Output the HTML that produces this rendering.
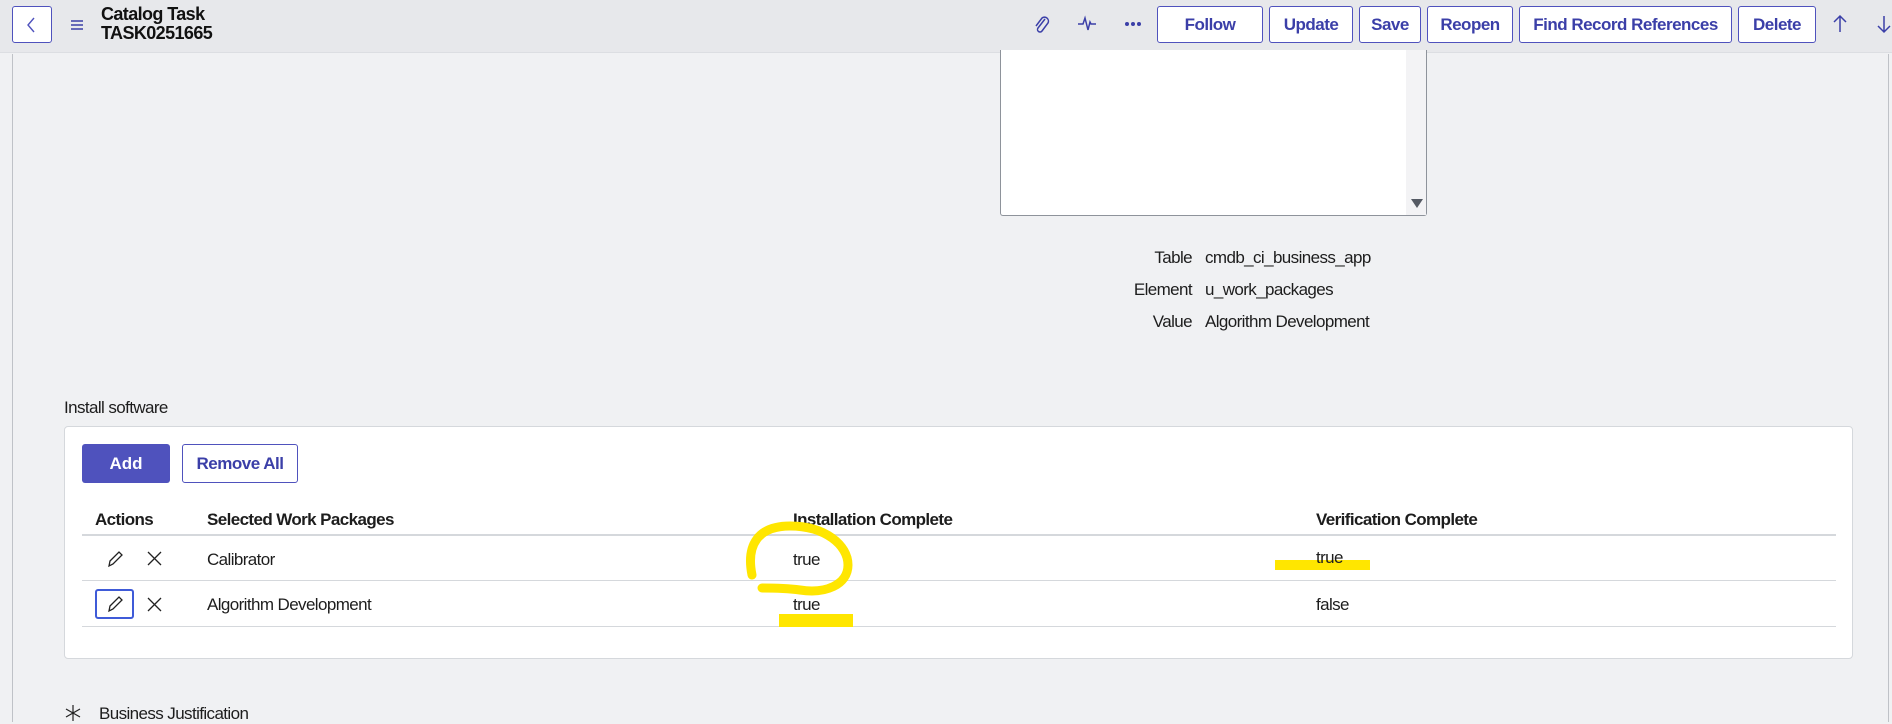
<!DOCTYPE html>
<html><head><meta charset="utf-8"><style>
*{box-sizing:border-box;margin:0;padding:0}
body{width:1892px;height:722px;overflow:hidden;background:#f0f1f3;font-family:"Liberation Sans",sans-serif;color:#1d1d1d;position:relative}
.hdr{position:absolute;left:0;top:0;width:1892px;height:53px;background:#e7e8eb;border-bottom:1px solid #dcdee2}
.abs{position:absolute}
.btn{position:absolute;top:6px;height:37px;border:1px solid #4f52bd;border-radius:3px;background:#fff;color:#3b3fa8;font-weight:bold;font-size:17px;display:flex;align-items:center;justify-content:center;letter-spacing:-0.5px}
.t{position:absolute;font-size:17px;white-space:nowrap;letter-spacing:-0.6px}
.b{font-weight:bold}
.line{position:absolute;left:82px;width:1754px;height:1px;background:#d5d8dc}
</style></head><body>
<div class="hdr"></div>
<div class="abs" style="left:12px;top:6px;width:40px;height:37px;border:1px solid #4f52bd;border-radius:3px;background:#fff"></div>
<svg class="abs" style="left:24px;top:16px" width="14" height="18"><path d="M10 2 L4 9 L10 16" stroke="#4f52bd" stroke-width="1.4" fill="none"/></svg>
<svg class="abs" style="left:70px;top:19px" width="14" height="12"><path d="M1 2H13M1 6H13M1 10H13" stroke="#3b3fa8" stroke-width="1.4"/></svg>
<div class="t b" style="left:101px;top:4px;font-size:18px;color:#111">Catalog Task</div>
<div class="t b" style="left:101px;top:23px;font-size:18px;color:#111">TASK0251665</div>
<svg class="abs" style="left:1033px;top:14px" width="18" height="22"><path d="M12 5 L5 14 a2.5 2.5 0 0 0 4 3 L15 9 a4 4 0 0 0 -6 -5 L3 12" stroke="#3b3fa8" stroke-width="1.5" fill="none"/></svg>
<svg class="abs" style="left:1077px;top:14px" width="20" height="20"><path d="M1 10H6L8 4L11 16L13 8L14 10H19" stroke="#3b3fa8" stroke-width="1.5" fill="none"/></svg>
<svg class="abs" style="left:1124px;top:21px" width="18" height="6"><circle cx="3" cy="3" r="2" fill="#3b3fa8"/><circle cx="9" cy="3" r="2" fill="#3b3fa8"/><circle cx="15" cy="3" r="2" fill="#3b3fa8"/></svg>
<div class="btn" style="left:1157px;width:106px">Follow</div>
<div class="btn" style="left:1269px;width:84px">Update</div>
<div class="btn" style="left:1359px;width:62px">Save</div>
<div class="btn" style="left:1427px;width:86px">Reopen</div>
<div class="btn" style="left:1519px;width:213px">Find Record References</div>
<div class="btn" style="left:1738px;width:78px">Delete</div>
<svg class="abs" style="left:1832px;top:14px" width="16" height="20"><path d="M8 2V18M2 8L8 2L14 8" stroke="#3b3fa8" stroke-width="1.5" fill="none"/></svg>
<svg class="abs" style="left:1877px;top:14px" width="15" height="20"><path d="M7 2V18M1 12L7 18L13 12" stroke="#3b3fa8" stroke-width="1.5" fill="none"/></svg>
<div class="abs" style="left:12px;top:54px;width:1px;height:668px;background:#bfc2c7"></div>
<div class="abs" style="left:1888px;top:54px;width:1px;height:668px;background:#bfc2c7"></div>
<div class="abs" style="left:1000px;top:50px;width:427px;height:166px;background:#fff;border:1px solid #8e939b;border-top:none;border-radius:0 0 3px 3px"></div>
<div class="abs" style="left:1406px;top:50px;width:20px;height:165px;background:#f3f3f5"></div>
<svg class="abs" style="left:1411px;top:199px" width="12" height="10"><path d="M0 0H12L6 9Z" fill="#555a64"/></svg>
<div class="t" style="right:700px;top:248px">Table</div><div class="t" style="left:1205px;top:248px">cmdb_ci_business_app</div>
<div class="t" style="right:700px;top:280px">Element</div><div class="t" style="left:1205px;top:280px">u_work_packages</div>
<div class="t" style="right:700px;top:312px">Value</div><div class="t" style="left:1205px;top:312px">Algorithm Development</div>
<div class="t" style="left:64px;top:398px">Install software</div>
<div class="abs" style="left:64px;top:426px;width:1789px;height:233px;background:#fff;border:1px solid #d5d8dc;border-radius:4px"></div>
<div class="abs" style="left:82px;top:444px;width:88px;height:39px;background:#4f52bd;border-radius:3px;color:#fff;font-weight:bold;font-size:17px;display:flex;align-items:center;justify-content:center">Add</div>
<div class="abs" style="left:182px;top:444px;width:116px;height:39px;border:1px solid #4f52bd;border-radius:3px;color:#3b3fa8;font-weight:bold;font-size:17px;display:flex;align-items:center;justify-content:center;letter-spacing:-0.5px">Remove All</div>
<div class="t b" style="left:95px;top:510px">Actions</div>
<div class="t b" style="left:207px;top:510px">Selected Work Packages</div>
<div class="t b" style="left:793px;top:510px">Installation Complete</div>
<div class="t b" style="left:1316px;top:510px">Verification Complete</div>
<div class="line" style="top:534px;height:2px"></div>
<div class="line" style="top:580px"></div>
<div class="line" style="top:626px"></div>
<svg class="abs" style="left:105px;top:549px" width="20" height="20"><path d="M4 17L5 12L14 3L17 6L8 15Z" stroke="#222" stroke-width="1.3" fill="none"/></svg>
<svg class="abs" style="left:147px;top:551px" width="15" height="15"><path d="M1 1L14 14M14 1L1 14" stroke="#222" stroke-width="1.3"/></svg>
<div class="t" style="left:207px;top:550px">Calibrator</div>
<svg class="abs" style="left:0;top:0" width="1892" height="722">
<path d="M752 575 C746 545 758 526 790 526 C825 526 848 545 848 565 C848 585 825 594 800 590 C785 588 770 588 762 588" stroke="#ffe600" stroke-width="9" fill="none" stroke-linecap="round"/>
<rect x="779" y="614" width="74" height="13" fill="#ffe600"/>
<rect x="1275" y="560" width="95" height="10" fill="#ffe600"/>
</svg>
<div class="t" style="left:793px;top:550px">true</div>
<div class="t" style="left:1316px;top:548px">true</div>
<div class="abs" style="left:95px;top:589px;width:39px;height:30px;border:2px solid #3f5bd8;border-radius:3px"></div>
<svg class="abs" style="left:105px;top:594px" width="20" height="20"><path d="M4 17L5 12L14 3L17 6L8 15Z" stroke="#222" stroke-width="1.3" fill="none"/></svg>
<svg class="abs" style="left:147px;top:597px" width="15" height="15"><path d="M1 1L14 14M14 1L1 14" stroke="#222" stroke-width="1.3"/></svg>
<div class="t" style="left:207px;top:595px">Algorithm Development</div>
<div class="t" style="left:793px;top:595px">true</div>
<div class="t" style="left:1316px;top:595px">false</div>
<svg class="abs" style="left:64px;top:704px" width="18" height="18"><path d="M9 1V17M2 5L16 13M16 5L2 13" stroke="#222" stroke-width="1.2"/></svg>
<div class="t" style="left:99px;top:704px">Business Justification</div>
</body></html>
